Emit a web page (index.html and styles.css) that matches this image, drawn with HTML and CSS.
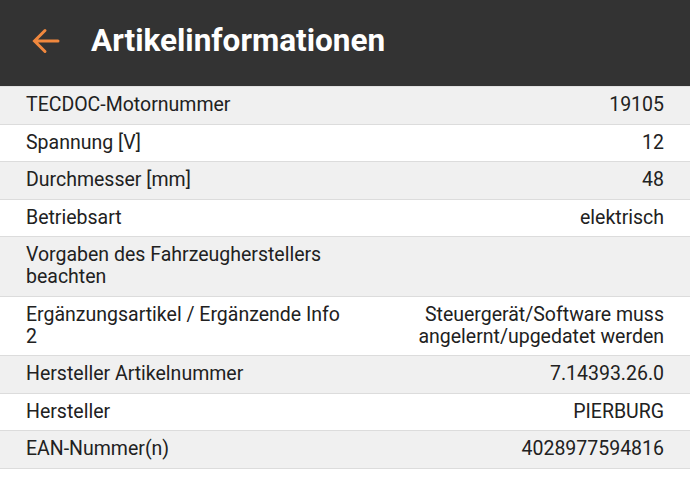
FILE: index.html
```html
<!DOCTYPE html>
<html lang="de">
<head>
<meta charset="utf-8">
<link rel="stylesheet" href="styles.css">
</head>
<body>
<header class="bar">
  <svg class="back" width="28" height="26" viewBox="0 0 28 26"><path d="M26 13H3M13 2.5L2.5 13L13 23.5" fill="none" stroke="#f0883e" stroke-width="3" stroke-linecap="round" stroke-linejoin="miter"/></svg>
  <h1 class="title">Artikelinformationen</h1>
</header>
<div class="list">
  <div class="row alt"><span class="k">TECDOC-Motornummer</span><span class="v">19105</span></div>
  <div class="row"><span class="k">Spannung [V]</span><span class="v">12</span></div>
  <div class="row alt"><span class="k">Durchmesser [mm]</span><span class="v">48</span></div>
  <div class="row"><span class="k">Betriebsart</span><span class="v">elektrisch</span></div>
  <div class="row alt"><span class="k">Vorgaben des Fahrzeugherstellers beachten</span><span class="v"></span></div>
  <div class="row"><span class="k">Ergänzungsartikel / Ergänzende Info 2</span><span class="v">Steuergerät/Software muss angelernt/upgedatet werden</span></div>
  <div class="row alt"><span class="k">Hersteller Artikelnummer</span><span class="v">7.14393.26.0</span></div>
  <div class="row"><span class="k">Hersteller</span><span class="v">PIERBURG</span></div>
  <div class="row alt"><span class="k">EAN-Nummer(n)</span><span class="v">4028977594816</span></div>
</div>
</body>
</html>
```
FILE: styles.css
```css
* { box-sizing: border-box; }
body {
  margin: 0;
  background: #fff;
  font-family: Roboto, "Noto Sans", sans-serif;
  color: #212121;
}
.bar {
  height: 86px;
  background: #333333;
  display: flex;
  align-items: center;
  padding-left: 32px;
  gap: 31px;
}
.back { display: block; margin-top: -4px; }
.title {
  margin: 0;
  color: #fff;
  font-size: 31.5px;
  font-weight: 700;
  margin-top: -6px;
}
.list { border-top: 1px solid #e2e2e2; }
.row {
  display: grid;
  grid-template-columns: 318px 1fr;
  gap: 20px;
  padding: 7.25px 26px 7.25px 26px;
  border-bottom: 1px solid #dcdcdc;
  font-size: 19.5px;
  line-height: 22px;
  background: #fff;
}
.row.alt { background: #f0f0f0; }
.v { text-align: right; }
```
